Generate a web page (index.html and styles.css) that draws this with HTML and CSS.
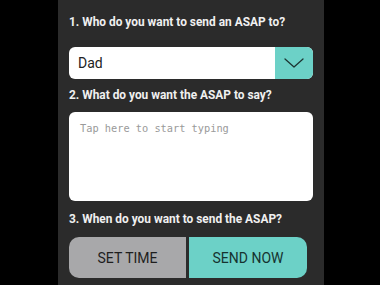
FILE: index.html
```html
<!DOCTYPE html>
<html lang="en">
<head>
<meta charset="utf-8">
<title>Send an ASAP</title>
<link rel="stylesheet" href="styles.css">
</head>
<body>
<main class="screen">
  <p class="question q1">1. Who do you want to send an ASAP to?</p>
  <div class="dropdown">
    <span class="dropdown-value">Dad</span>
    <span class="dropdown-toggle">
      <svg class="chevron" width="20" height="10" viewBox="0 0 20 10" aria-hidden="true">
        <path d="M1 1 L10 9 L19 1" fill="none" stroke="#1d3533" stroke-width="1.3" stroke-linecap="round" stroke-linejoin="round"/>
      </svg>
    </span>
  </div>
  <p class="question q2">2. What do you want the ASAP to say?</p>
  <textarea class="message" placeholder="Tap here to start typing"></textarea>
  <p class="question q3">3. When do you want to send the ASAP?</p>
  <div class="actions">
    <button class="btn btn-time" type="button">SET TIME</button>
    <button class="btn btn-now" type="button">SEND NOW</button>
  </div>
</main>
</body>
</html>
```
FILE: styles.css
```css
html, body {
  margin: 0;
  padding: 0;
  background: #000;
  overflow: hidden;
}

.screen {
  width: 266px;
  height: 285px;
  margin-left: 58px;
  box-sizing: border-box;
  padding: 14px 11px 0;
  background: #2b2b2b;
  display: flex;
  flex-direction: column;
  font-family: Roboto, "Liberation Sans", sans-serif;
}

.question {
  margin: 0;
  font-size: 11.9px;
  line-height: 16px;
  font-weight: 700;
  color: #f0f0f0;
  white-space: nowrap;
}

.q2 { margin-top: 8px; }
.q3 { margin-top: 10px; }

.dropdown {
  margin-top: 17px;
  height: 32px;
  display: flex;
  background: #fff;
  border-radius: 6px;
  overflow: hidden;
}

.dropdown-value {
  flex: 1;
  padding-left: 9px;
  font-size: 14px;
  line-height: 32px;
  color: #222;
}

.dropdown-toggle {
  width: 38px;
  background: #6cd1c7;
  display: flex;
  align-items: center;
  justify-content: center;
}

.message {
  margin-top: 9px;
  height: 89px;
  box-sizing: border-box;
  padding: 10px 11px;
  border: none;
  border-radius: 6px;
  background: #fff;
  resize: none;
  outline: none;
  font-family: "DejaVu Sans Mono", "Liberation Mono", monospace;
  font-size: 10.3px;
  line-height: 12px;
  color: #333;
}

.message::placeholder {
  color: #9a9a9a;
}

.actions {
  margin-top: 10px;
  width: 238px;
  height: 41px;
  display: flex;
  gap: 3px;
}

.btn {
  border: none;
  margin: 0;
  padding: 0;
  font-family: Roboto, "Liberation Sans", sans-serif;
  font-size: 14px;
  color: #1e1e1e;
  cursor: pointer;
}

.btn-time {
  width: 117px;
  background: #a8a8aa;
  border-radius: 10px 0 0 10px;
}

.btn-now {
  width: 118px;
  background: #6cd1c7;
  color: #163330;
  border-radius: 0 10px 10px 0;
}
```
